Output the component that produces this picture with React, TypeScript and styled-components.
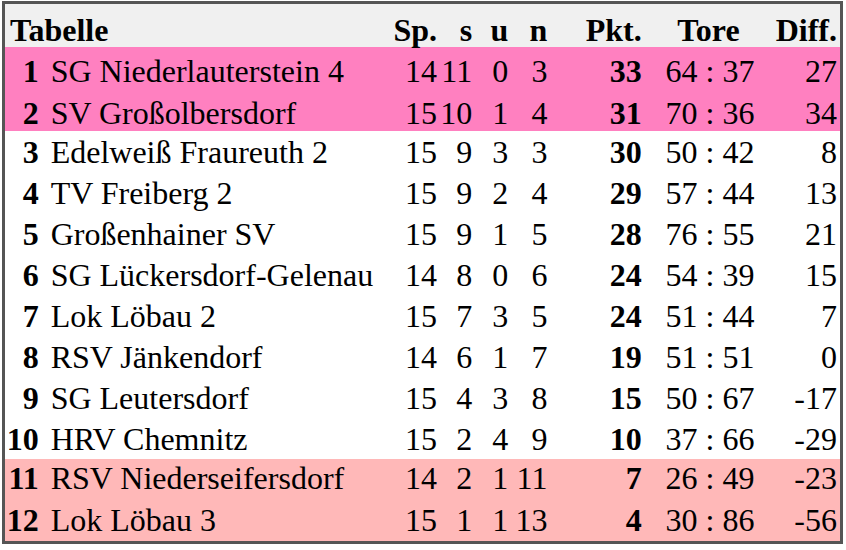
import styled, { createGlobalStyle } from "styled-components";

const GlobalStyle = createGlobalStyle`
  body {
    margin: 0;
    background: #fff;
    font-family: "Liberation Serif", "Times New Roman", serif;
  }
`;

const Wrapper = styled.div`
  padding: 1px 3px 0 2px;
`;

const Table = styled.table`
  width: 841px;
  border: 3px solid #555;
  border-collapse: collapse;
  table-layout: fixed;
  font-size: 32px;
  color: #000;
`;

const HeadRow = styled.tr`
  background: #f0f0f0;
`;

const Th = styled.th<{ $align?: string }>`
  height: 44px;
  box-sizing: border-box;
  padding: 10px 3px 0 0;
  line-height: 32px;
  vertical-align: top;
  font-weight: bold;
  white-space: nowrap;
  text-align: ${(p) => p.$align || "right"};
`;

const TitleTh = styled(Th)`
  padding-left: 5px;
  text-align: left;
`;

type Zone = "up" | "down" | undefined;

const zoneStyle = {
  up: { bg: "#ff80c0", h: 42, pad: 8 },
  down: { bg: "#ffb8b8", h: 42, pad: 3 },
  none: { bg: "#fff", h: 41, pad: 5 },
};

const Row = styled.tr<{ $zone?: Zone }>`
  background: ${(p) => zoneStyle[p.$zone || "none"].bg};
  & > td {
    height: ${(p) => zoneStyle[p.$zone || "none"].h}px;
    padding-top: ${(p) => zoneStyle[p.$zone || "none"].pad}px;
  }
`;

const Td = styled.td<{ $align?: string; $bold?: boolean }>`
  box-sizing: border-box;
  padding: 8px 3px 0 0;
  line-height: 32px;
  vertical-align: top;
  white-space: nowrap;
  text-align: ${(p) => p.$align || "right"};
  font-weight: ${(p) => (p.$bold ? "bold" : "normal")};
`;

const Rank = styled(Td)`
  padding-right: 4px;
  font-weight: bold;
`;

const Name = styled(Td)`
  padding-left: 8px;
  text-align: left;
`;

const Goals = styled(Td)`
  padding-right: 0;
  text-align: center;
`;

interface Team {
  name: string;
  sp: number;
  s: number;
  u: number;
  n: number;
  pkt: number;
  tore: string;
  diff: number;
}

const teams: Team[] = [
  { name: "SG Niederlauterstein 4", sp: 14, s: 11, u: 0, n: 3, pkt: 33, tore: "64 : 37", diff: 27 },
  { name: "SV Großolbersdorf", sp: 15, s: 10, u: 1, n: 4, pkt: 31, tore: "70 : 36", diff: 34 },
  { name: "Edelweiß Fraureuth 2", sp: 15, s: 9, u: 3, n: 3, pkt: 30, tore: "50 : 42", diff: 8 },
  { name: "TV Freiberg 2", sp: 15, s: 9, u: 2, n: 4, pkt: 29, tore: "57 : 44", diff: 13 },
  { name: "Großenhainer SV", sp: 15, s: 9, u: 1, n: 5, pkt: 28, tore: "76 : 55", diff: 21 },
  { name: "SG Lückersdorf-Gelenau", sp: 14, s: 8, u: 0, n: 6, pkt: 24, tore: "54 : 39", diff: 15 },
  { name: "Lok Löbau 2", sp: 15, s: 7, u: 3, n: 5, pkt: 24, tore: "51 : 44", diff: 7 },
  { name: "RSV Jänkendorf", sp: 14, s: 6, u: 1, n: 7, pkt: 19, tore: "51 : 51", diff: 0 },
  { name: "SG Leutersdorf", sp: 15, s: 4, u: 3, n: 8, pkt: 15, tore: "50 : 67", diff: -17 },
  { name: "HRV Chemnitz", sp: 15, s: 2, u: 4, n: 9, pkt: 10, tore: "37 : 66", diff: -29 },
  { name: "RSV Niederseifersdorf", sp: 14, s: 2, u: 1, n: 11, pkt: 7, tore: "26 : 49", diff: -23 },
  { name: "Lok Löbau 3", sp: 15, s: 1, u: 1, n: 13, pkt: 4, tore: "30 : 86", diff: -56 },
];

function zoneOf(pos: number): Zone {
  if (pos <= 2) return "up";
  if (pos >= 11) return "down";
  return undefined;
}

export default function App() {
  return (
    <Wrapper>
      <GlobalStyle />
      <Table>
        <colgroup>
          <col style={{ width: 39 }} />
          <col style={{ width: 348 }} />
          <col style={{ width: 48 }} />
          <col style={{ width: 35 }} />
          <col style={{ width: 36 }} />
          <col style={{ width: 39 }} />
          <col style={{ width: 94 }} />
          <col style={{ width: 130 }} />
          <col style={{ width: 66 }} />
        </colgroup>
        <thead>
          <HeadRow>
            <TitleTh colSpan={2}>Tabelle</TitleTh>
            <Th>Sp.</Th>
            <Th>s</Th>
            <Th>u</Th>
            <Th>n</Th>
            <Th>Pkt.</Th>
            <Th $align="center">Tore</Th>
            <Th>Diff.</Th>
          </HeadRow>
        </thead>
        <tbody>
          {teams.map((t, i) => (
            <Row key={t.name} $zone={zoneOf(i + 1)}>
              <Rank>{i + 1}</Rank>
              <Name>{t.name}</Name>
              <Td>{t.sp}</Td>
              <Td>{t.s}</Td>
              <Td>{t.u}</Td>
              <Td>{t.n}</Td>
              <Td $bold>{t.pkt}</Td>
              <Goals>{t.tore}</Goals>
              <Td>{t.diff}</Td>
            </Row>
          ))}
        </tbody>
      </Table>
    </Wrapper>
  );
}
